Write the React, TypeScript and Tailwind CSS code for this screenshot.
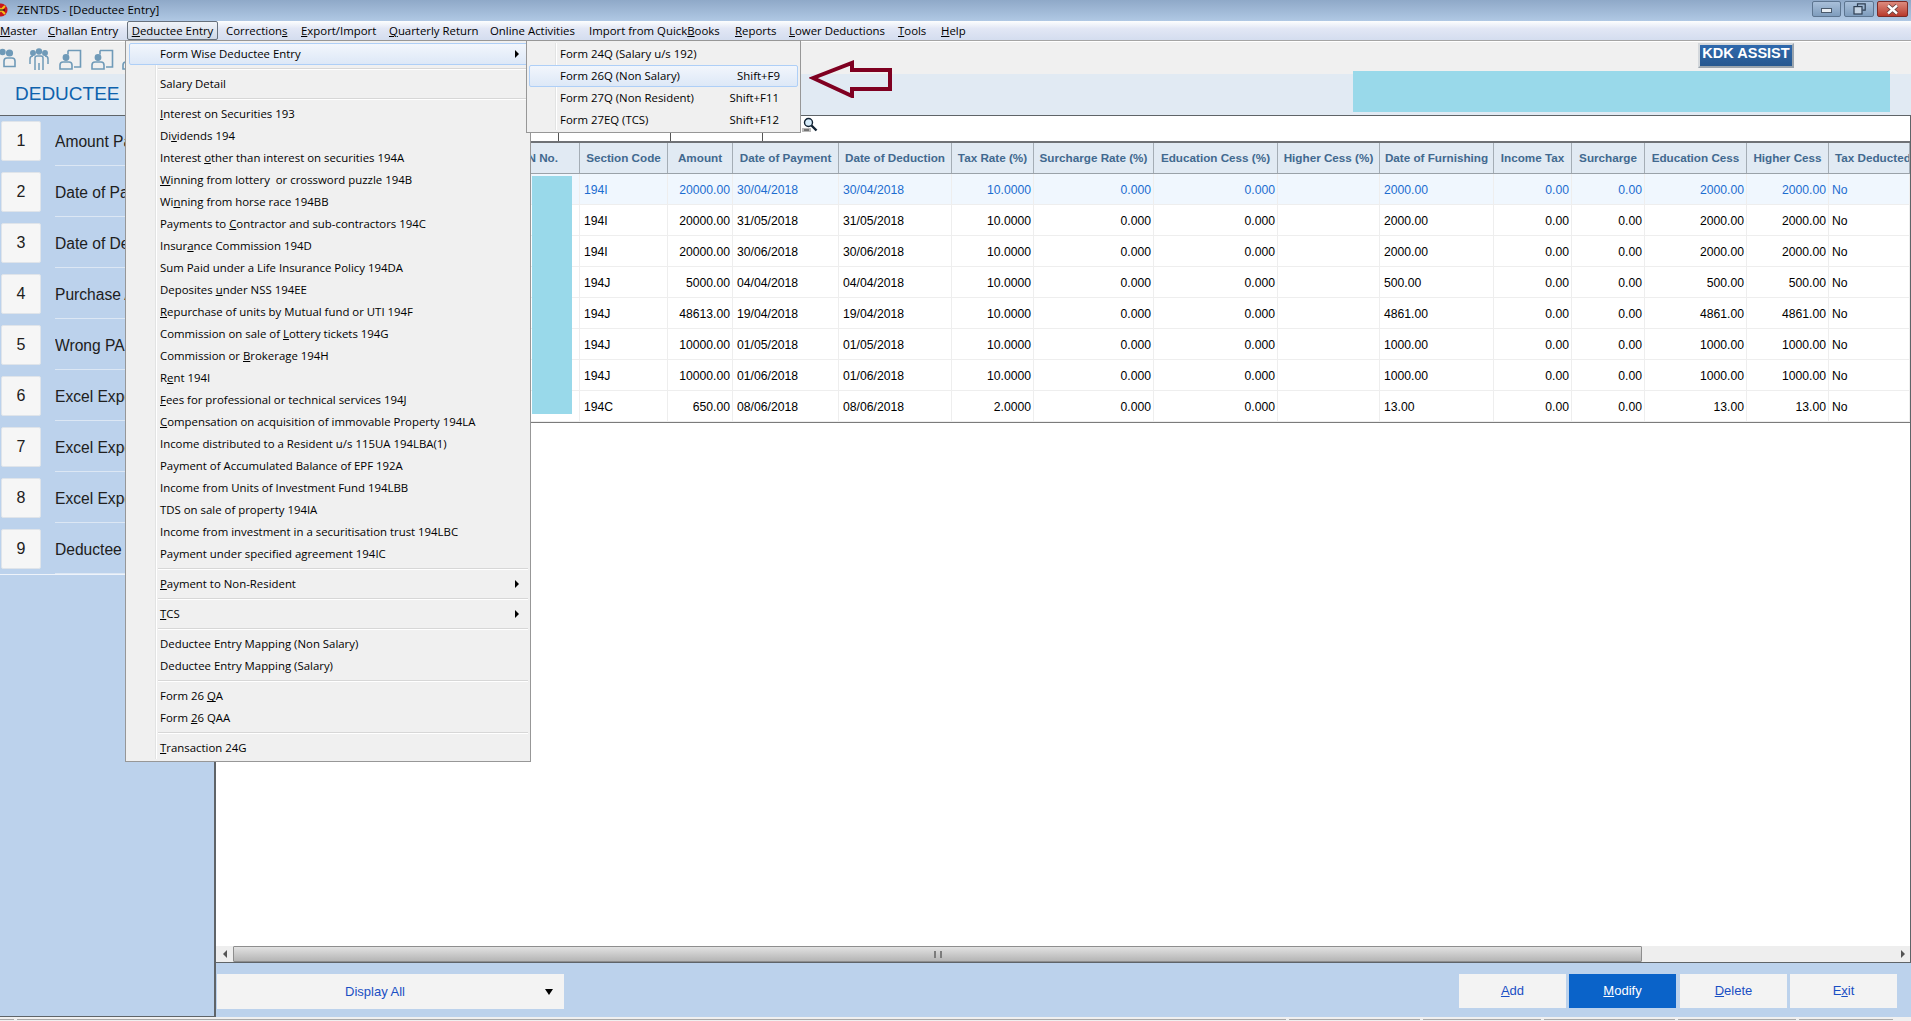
const columns = "grid grid-cols-[364px_88px_65px_106px_113px_82px_120px_124px_102px_114px_78px_73px_102px_82px_81px]";

const menuItems = [
  { label: "&Master", w: "w-[48px]" },
  { label: "&Challan Entry", w: "w-[84px]" },
  { label: "&Deductee Entry", w: "w-[94px]", active: true },
  { label: "Correction&s", w: "w-[75px]" },
  { label: "&Export/Import", w: "w-[88px]" },
  { label: "&Quarterly Return", w: "w-[101px]" },
  { label: "Online Activities", w: "w-[99px]" },
  { label: "Import from Quick&Books", w: "w-[146px]" },
  { label: "&Reports", w: "w-[54px]" },
  { label: "&Lower Deductions", w: "w-[109px]" },
  { label: "&Tools", w: "w-[43px]" },
  { label: "&Help", w: "w-[40px]" },
];

const sideItems = [
  "Amount Paid",
  "Date of Payment",
  "Date of Deduction",
  "Purchase A",
  "Wrong PAN",
  "Excel Export",
  "Excel Export",
  "Excel Export",
  "Deductee",
];

const headers = [
  "N No.",
  "Section Code",
  "Amount",
  "Date of Payment",
  "Date of Deduction",
  "Tax Rate (%)",
  "Surcharge Rate (%)",
  "Education Cess (%)",
  "Higher Cess (%)",
  "Date of Furnishing",
  "Income Tax",
  "Surcharge",
  "Education Cess",
  "Higher Cess",
  "Tax Deducted",
];

const rows = [
  ["194I", "20000.00", "30/04/2018", "30/04/2018", "10.0000", "2000.00"],
  ["194I", "20000.00", "31/05/2018", "31/05/2018", "10.0000", "2000.00"],
  ["194I", "20000.00", "30/06/2018", "30/06/2018", "10.0000", "2000.00"],
  ["194J", "5000.00", "04/04/2018", "04/04/2018", "10.0000", "500.00"],
  ["194J", "48613.00", "19/04/2018", "19/04/2018", "10.0000", "4861.00"],
  ["194J", "10000.00", "01/05/2018", "01/05/2018", "10.0000", "1000.00"],
  ["194J", "10000.00", "01/06/2018", "01/06/2018", "10.0000", "1000.00"],
  ["194C", "650.00", "08/06/2018", "08/06/2018", "2.0000", "13.00"],
];

const formMenu: (string | { label: string; arrow?: boolean; active?: boolean } | null)[] = [
  { label: "Form Wise Deductee Entry", arrow: true, active: true },
  null,
  "Salary Detail",
  null,
  "&Interest on Securities 193",
  "Di&vidends 194",
  "Interest &other than interest on securities 194A",
  "&Winning from lottery  or crossword puzzle 194B",
  "Wi&nning from horse race 194BB",
  "Payments to &Contractor and sub-contractors 194C",
  "Insur&ance Commission 194D",
  "Sum Paid under a Life Insurance Policy 194DA",
  "Deposites &under NSS 194EE",
  "&Repurchase of units by Mutual fund or UTI 194F",
  "Commission on sale of &Lottery tickets 194G",
  "Commission or &Brokerage 194H",
  "R&ent 194I",
  "&Fees for professional or technical services 194J",
  "&Compensation on acquisition of immovable Property 194LA",
  "Income distributed to a Resident u/s 115UA 194LBA(1)",
  "Payment of Accumulated Balance of EPF 192A",
  "Income from Units of Investment Fund 194LBB",
  "TDS on sale of property 194IA",
  "Income from investment in a securitisation trust 194LBC",
  "Payment under specified agreement 194IC",
  null,
  { label: "&Payment to Non-Resident", arrow: true },
  null,
  { label: "&TCS", arrow: true },
  null,
  "Deductee Entry Mapping (Non Salary)",
  "Deductee Entry Mapping (Salary)",
  null,
  "Form 26 &QA",
  "Form &26 QAA",
  null,
  "&Transaction 24G",
];

const subMenu = [
  { label: "Form 24Q (Salary u/s 192)", key: "" },
  { label: "Form 26Q (Non Salary)", key: "Shift+F9", active: true },
  { label: "Form 27Q (Non Resident)", key: "Shift+F11" },
  { label: "Form 27EQ (TCS)", key: "Shift+F12" },
];

const statusCells = ["w-[14px]", "w-[1269px]", "w-[131px]", "w-[118px]", "w-[131px]", "w-[118px]", "w-[94px]"];

// "&x" underlines the next letter, same as a win32 menu caption
const Label = ({ text }: { text: string }) => {
  const at = text.indexOf("&");
  if (at < 0) return <>{text}</>;
  return (
    <>
      {text.slice(0, at)}
      <u>{text[at + 1]}</u>
      {text.slice(at + 2)}
    </>
  );
};

const PersonFrame = () => (
  <svg width="23" height="21" viewBox="0 0 23 21" fill="none" stroke="#6f9ab8" strokeWidth="1.6" className="shrink-0">
    <path d="M9 1.5h12.5v16.5H15" />
    <path d="M9 1.5v4" />
    <circle cx="7" cy="8.5" r="2.6" fill="#6f9ab8" />
    <path d="M1 20v-4q0-3 3-3h6q3 0 3 3v4z" />
  </svg>
);

const TwoPeople = () => (
  <svg width="16" height="20" viewBox="0 0 16 20" fill="none" stroke="#6f9ab8" strokeWidth="1.6" className="shrink-0">
    <circle cx="2.5" cy="4" r="2.4" fill="#6f9ab8" />
    <circle cx="9.5" cy="5" r="2.8" fill="#6f9ab8" />
    <path d="M4 18.5V13q0-3 3-3h5q3 0 3 3v5.5z" />
  </svg>
);

const ThreePeople = () => (
  <svg width="20" height="23" viewBox="0 0 20 23" fill="none" stroke="#6f9ab8" strokeWidth="1.5" className="shrink-0">
    <circle cx="4" cy="5" r="2.2" fill="#6f9ab8" />
    <circle cx="10" cy="3.5" r="2.4" fill="#6f9ab8" />
    <circle cx="16" cy="5" r="2.2" fill="#6f9ab8" />
    <path d="M1 16v-5q0-3 3-3M19 16v-5q0-3-3-3" />
    <path d="M6 22v-12q0-2 2-2h4q2 0 2 2v12M10 15v7" />
  </svg>
);

const MenuArrow = () => <span className="h-0 w-0 border-y-[4px] border-l-[4px] border-y-transparent border-l-black" />;

const Separator = () => (
  <div className="flex h-[8px] items-center pl-[31px] pr-[2px]">
    <div className="h-[2px] w-full border-t border-[#d7d7d7] bg-white" />
  </div>
);

const FormMenu = () => (
  <div className="absolute left-[125px] top-[40px] z-10 w-[406px] border border-[#979797] bg-[#f0f0f0] py-[2px] pl-[1px] font-['Open_Sans',sans-serif] text-[11.4px] text-black">
    <div className="absolute bottom-[2px] left-[29px] top-[2px] w-[2px] border-l border-[#e2e3e3] bg-white" />
    {formMenu.map((item, i) => {
      if (item === null) return <Separator key={i} />;
      const entry = typeof item === "string" ? { label: item } : item;
      return (
        <div
          key={i}
          className={
            "relative flex h-[22px] items-center justify-between pl-[33px] pr-[11px] " +
            (entry.active ? "mx-[2px] rounded-[2px] border border-[#aecff7] bg-linear-to-b from-[#f2f6fc] to-[#dde8f7] !pl-[30px] !pr-[8px]" : "")
          }
        >
          <span className="whitespace-pre">
            <Label text={entry.label} />
          </span>
          {entry.arrow && <MenuArrow />}
        </div>
      );
    })}
  </div>
);

const SubMenu = () => (
  <div className="absolute left-[526px] top-[40px] z-20 h-[93px] w-[275px] border border-[#979797] bg-[#f0f0f0] py-[2px] font-['Open_Sans',sans-serif] text-[11.4px] text-black">
    <div className="absolute bottom-[2px] left-[28px] top-[2px] w-[2px] border-l border-[#e2e3e3] bg-white" />
    {subMenu.map((item) => (
      <div
        key={item.label}
        className={
          "relative flex h-[22px] items-center justify-between pl-[33px] pr-[21px] " +
          (item.active ? "mx-[2px] rounded-[2px] border border-[#aecff7] bg-linear-to-b from-[#f2f6fc] to-[#dde8f7] !pl-[30px] !pr-[17px]" : "")
        }
      >
        <span>{item.label}</span>
        <span>{item.key}</span>
      </div>
    ))}
  </div>
);

const WindowButtons = () => (
  <div className="flex items-start gap-[3px] pr-[3px] pt-[1px]">
    <div className="flex h-[16px] w-[29px] items-center justify-center rounded-[2px] border border-[#5d7590] bg-linear-to-b from-[#a9c0da] to-[#7f9dbd]">
      <div className="mt-[2px] h-[5px] w-[11px] border border-[#4a5a6c] bg-[#e7edf3]" />
    </div>
    <div className="flex h-[16px] w-[30px] items-center justify-center rounded-[2px] border border-[#5d7590] bg-linear-to-b from-[#a9c0da] to-[#7f9dbd]">
      <svg width="13" height="12" viewBox="0 0 13 12" fill="none" stroke="#2e3e52" strokeWidth="1.2">
        <path d="M4.5 3V.8h7.7v6.4H9.5" />
        <rect x="1" y="3.6" width="8" height="7.4" fill="#c4d3e3" />
      </svg>
    </div>
    <div className="flex h-[16px] w-[31px] items-center justify-center rounded-[2px] border border-[#7c2b26] bg-linear-to-b from-[#dc8a7e] to-[#b8392c]">
      <svg width="13" height="11" viewBox="0 0 13 11" fill="none">
        <path d="M2 1.5l9 8M11 1.5l-9 8" stroke="#5b3a38" strokeWidth="4" />
        <path d="M2 1.5l9 8M11 1.5l-9 8" stroke="#fff" strokeWidth="2.4" />
      </svg>
    </div>
  </div>
);

export default function App() {
  return (
    <div className="relative flex h-[1021px] w-[1911px] flex-col overflow-hidden bg-[#f0f0f0] font-['Liberation_Sans',sans-serif]">
      {/* title bar */}
      <div className="flex h-[21px] items-start justify-between bg-linear-to-b from-[#8fa9c8] to-[#b0c8e4]">
        <div className="flex h-[20px] items-center">
          <svg width="8" height="14" viewBox="0 0 8 14" className="shrink-0">
            <circle cx="1" cy="7" r="6.5" fill="#c9161c" />
            <path d="M-3 3l8 8M5 3l-8 8" stroke="#f2c21a" strokeWidth="2" />
            <path d="M-1 7h6" stroke="#111" strokeWidth="1" />
          </svg>
          <span className="ml-[9px] font-['Open_Sans',sans-serif] text-[11.5px] text-black">ZENTDS - [Deductee Entry]</span>
        </div>
        <WindowButtons />
      </div>

      {/* menu bar */}
      <div className="flex h-[19px] items-center bg-linear-to-b from-[#fdfefe] via-[#e2e7f5] via-40% to-[#d4ddef] font-['Open_Sans',sans-serif] text-[11.4px] text-black">
        {menuItems.map((m) => (
          <div key={m.label} className={m.w + " flex h-[19px] shrink-0 items-center"}>
            {m.active ? (
              <div className="flex h-[19px] w-[91px] -translate-x-[5px] items-center justify-center rounded-[2px] border border-[#66707c] bg-linear-to-b from-[#f0f3f8] to-[#cfd8e6]">
                <Label text={m.label} />
              </div>
            ) : (
              <Label text={m.label} />
            )}
          </div>
        ))}
      </div>
      <div className="h-[2px] border-t border-[#a5a5a5] bg-white" />

      {/* toolbar */}
      <div className="flex h-[32px] items-start bg-[#f0f0f0]">
        <div className="mt-[6px] flex items-start">
          <TwoPeople />
          <div className="ml-[13px]">
            <ThreePeople />
          </div>
          <div className="ml-[10px] mt-[1px]">
            <PersonFrame />
          </div>
          <div className="ml-[9px] mt-[1px]">
            <PersonFrame />
          </div>
          <div className="ml-[8px] mt-[1px]">
            <PersonFrame />
          </div>
        </div>
        <div className="ml-auto mr-[117px] mt-[1px] flex h-[25px] w-[96px] items-center justify-center border-2 border-[#9aa4ad] border-l-[#d4d8dc] border-t-[#d4d8dc] bg-linear-to-b from-[#2f69ad] to-[#27588f] pb-[3px] text-[14.5px] font-bold text-white">
          KDK ASSIST
        </div>
      </div>

      {/* page heading */}
      <div className="relative flex h-[41px] items-center bg-[#e1eaf3] pl-[15px] text-[19px] text-[#0e62ad]">
        DEDUCTEE
        <div className="absolute left-[1353px] top-[-3px] h-[41px] w-[537px] bg-[#99d9ea]" />
      </div>

      <div className="flex min-h-0 flex-1">
        {/* sidebar */}
        <div className="h-[902px] w-[214px] shrink-0 border-b border-t border-[#5f6468] bg-[#bcd2ec]">
          {sideItems.map((s, i) => (
            <div key={i} className="flex h-[51px] items-start pl-[1px] text-[15.6px] text-[#202020]">
              <div className="mt-[5px] flex h-[40px] w-[40px] shrink-0 items-center justify-center rounded-[2px] border border-[#dfe4ea] bg-[#f6f6f6] text-[16px]">
                {i + 1}
              </div>
              <div className="ml-[14px] h-[50px] flex-1 border-b border-[#dce7f4] pt-[14px]">
                <div className="w-[70px] overflow-hidden whitespace-nowrap">{s}</div>
              </div>
            </div>
          ))}
          <div className="-mt-[1px] h-[1px] bg-[#eef3fa]" />
        </div>

        {/* right side */}
        <div className="flex min-w-0 flex-1 flex-col border-l-2 border-[#5f6468] bg-[#bcd2ec]">
          <div className="relative flex h-[848px] flex-col border-b border-r border-t border-[#5f6468] bg-white">
            {/* filter row */}
            <div className="flex h-[25px] items-end">
              <div className="h-[8px] w-[343px] border-r border-[#555]" />
              <div className="h-[8px] w-[112px] border-r border-[#555]" />
              <div className="h-[8px] w-[92px] border-r border-[#555]" />
              <svg width="16" height="16" viewBox="0 0 16 16" className="mb-[8px] ml-[39px]">
                <rect x="0" y="11" width="9" height="4" fill="#b9b9b9" />
                <path d="M2 13h5" stroke="#333" strokeWidth="1" />
                <circle cx="6.5" cy="5.5" r="4" fill="#d6ecfa" stroke="#123" strokeWidth="1.4" />
                <path d="M9.5 8.5l5 5" stroke="#123" strokeWidth="2.4" />
              </svg>
            </div>

            {/* grid */}
            <div className={columns + " h-[33px] border-b border-t-2 border-b-[#9aa2a9] border-t-[#6f7276] bg-[#e1eaf3] text-[11.7px] font-bold text-[#41698f]"}>
              {headers.map((h, i) => (
                <div
                  key={h}
                  className={
                    "flex items-center overflow-hidden whitespace-nowrap border-r border-[#a4adb5] " +
                    (i === 0 ? "justify-end pr-[21px] " : i === 14 ? "justify-start pl-[6px] " : "justify-center ")
                  }
                >
                  {h}
                </div>
              ))}
            </div>
            {rows.map((r, i) => {
              const cell = "flex items-center border-b border-r border-[#eeeeee] pt-[2px] ";
              const left = cell + "pl-[4px]";
              const right = cell + "justify-end pr-[2px]";
              return (
                <div key={i} className={columns + " h-[31px] text-[12.2px] " + (i === 0 ? "bg-[#f0f7fe] text-[#1c6dd0]" : "text-black")}>
                  <div className={cell} />
                  <div className={left}>{r[0]}</div>
                  <div className={right}>{r[1]}</div>
                  <div className={left}>{r[2]}</div>
                  <div className={left}>{r[3]}</div>
                  <div className={right}>{r[4]}</div>
                  <div className={right}>0.000</div>
                  <div className={right}>0.000</div>
                  <div className={cell} />
                  <div className={left}>{r[5]}</div>
                  <div className={right}>0.00</div>
                  <div className={right}>0.00</div>
                  <div className={right}>{r[5]}</div>
                  <div className={right}>{r[5]}</div>
                  <div className={cell + "pl-[3px]"}>No</div>
                </div>
              );
            })}
            <div className="h-[1px] bg-[#7b7b7b]" />
            <div className="absolute left-[316px] top-[60px] h-[238px] w-[40px] bg-[#99d9ea]" />

            {/* horizontal scrollbar */}
            <div className="mt-auto flex h-[16px] items-center bg-[#eeeeee]">
              <div className="flex h-[16px] w-[17px] shrink-0 items-center justify-center">
                <span className="h-0 w-0 border-y-[4px] border-r-[4px] border-y-transparent border-r-[#555]" />
              </div>
              <div className="flex h-[16px] w-[1409px] shrink-0 items-center justify-center rounded-[1px] border border-[#8e8e8e] bg-linear-to-b from-[#e2e2e2] to-[#b5b5b5]">
                <div className="h-[7px] w-[8px] border-x-2 border-[#7c7c7c]" />
              </div>
              <div className="ml-auto mr-[5px] h-0 w-0 border-y-[4px] border-l-[4px] border-y-transparent border-l-[#555]" />
            </div>
          </div>

          {/* bottom buttons */}
          <div className="flex flex-1 items-start pl-[1px] pr-[14px] pt-[11px] text-[13px] text-[#1a4fc4]">
            <div className="flex h-[35px] w-[347px] items-center justify-end bg-[#f3f3f3] pr-[11px]">
              <span className="mr-[140px]">Display All</span>
              <span className="h-0 w-0 border-x-[4px] border-t-[6px] border-x-transparent border-t-black" />
            </div>
            <div className="ml-auto flex h-[34px] items-stretch">
              <div className="flex w-[107px] items-center justify-center bg-[#f3f3f3]">
                <Label text="&Add" />
              </div>
              <div className="ml-[3px] flex w-[107px] items-center justify-center bg-[#0a63c9] text-white">
                <Label text="&Modify" />
              </div>
              <div className="ml-[4px] flex w-[107px] items-center justify-center bg-[#f3f3f3]">
                <Label text="&Delete" />
              </div>
              <div className="ml-[3px] flex w-[107px] items-center justify-center bg-[#f3f3f3]">
                <Label text="E&xit" />
              </div>
            </div>
          </div>
        </div>
      </div>

      {/* status bar */}
      <div className="flex h-[4px] gap-[3px] bg-[#f0f0f0] pt-[2px]">
        {statusCells.map((w, i) => (
          <div key={i} className={w + " border-t border-[#a9a9a9]"} />
        ))}
      </div>

      <FormMenu />
      <SubMenu />

      {/* red arrow pointing at the highlighted entry */}
      <svg width="84" height="38" viewBox="0 0 84 38" fill="none" className="absolute left-[809px] top-[60px] z-30">
        <path d="M4 18L43 3v7h38v19H43v7z" stroke="#7f0021" strokeWidth="4" />
      </svg>
    </div>
  );
}
